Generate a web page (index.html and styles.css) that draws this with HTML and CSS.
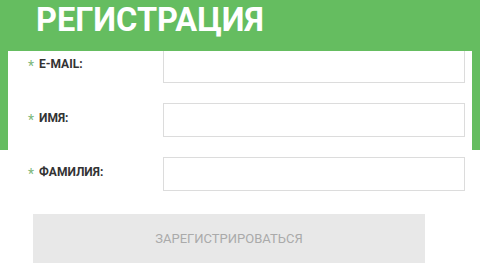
FILE: index.html
```html
<!DOCTYPE html>
<html lang="ru">

<head>
  <meta charset="UTF-8" />
  <meta name="viewport" content="width=device-width, initial-scale=1.0" />
  <title>Регистрация</title>
  <link rel="stylesheet" href="styles.css">
</head>

<body>
  <header class="hero">
    <h1 class="hero-title">РЕГИСТРАЦИЯ</h1>
  </header>

  <form class="card">
    <div class="fields">
      <label class="field-label" for="email"><span class="req">*</span>E-MAIL:</label>
      <input class="field-input" type="email" id="email" />

      <label class="field-label" for="name"><span class="req">*</span>ИМЯ:</label>
      <input class="field-input" type="text" id="name" />

      <label class="field-label" for="surname"><span class="req">*</span>ФАМИЛИЯ:</label>
      <input class="field-input" type="text" id="surname" />
    </div>

    <div class="actions">
      <button class="submit" type="submit" disabled>ЗАРЕГИСТРИРОВАТЬСЯ</button>
    </div>
  </form>
</body>

</html>
```

FILE: styles.css
```css
body {
  margin: 0;
  font-family: Roboto, 'Liberation Sans', sans-serif;
  background: #ffffff;
  color: #333;
}

.hero {
  height: 150px;
  background: #65bd60;
  padding-left: 36px;
}

.hero-title {
  margin: 0;
  font-size: 32.5px;
  font-weight: 700;
  line-height: 41px;
  color: #ffffff;
}

.card {
  position: relative;
  margin: -99px 8px 0 8px;
  background: #ffffff;
  overflow: hidden;
}

.fields {
  display: grid;
  grid-template-columns: 135px 1fr;
  row-gap: 20px;
  align-items: center;
  margin-top: -2px;
  padding: 0 7px 0 20px;
}

.field-label {
  display: flex;
  align-items: center;
  gap: 5px;
  font-size: 12px;
  font-weight: 700;
  color: #333;
  margin-top: -4px;
}

.req {
  color: #7cb87c;
  font-size: 14px;
  font-weight: 400;
  line-height: 1;
  margin-top: 3px;
}

.field-input {
  box-sizing: border-box;
  height: 34px;
  border: 1px solid #dcdcdc;
  background: #fff;
  margin: 0;
}

.actions {
  padding: 23px 0 0 25px;
}

.submit {
  width: 392px;
  height: 49px;
  border: none;
  background: #e8e8e8;
  color: #aaaaaa;
  font-family: Roboto, 'Liberation Sans', sans-serif;
  font-size: 13px;
}
```
